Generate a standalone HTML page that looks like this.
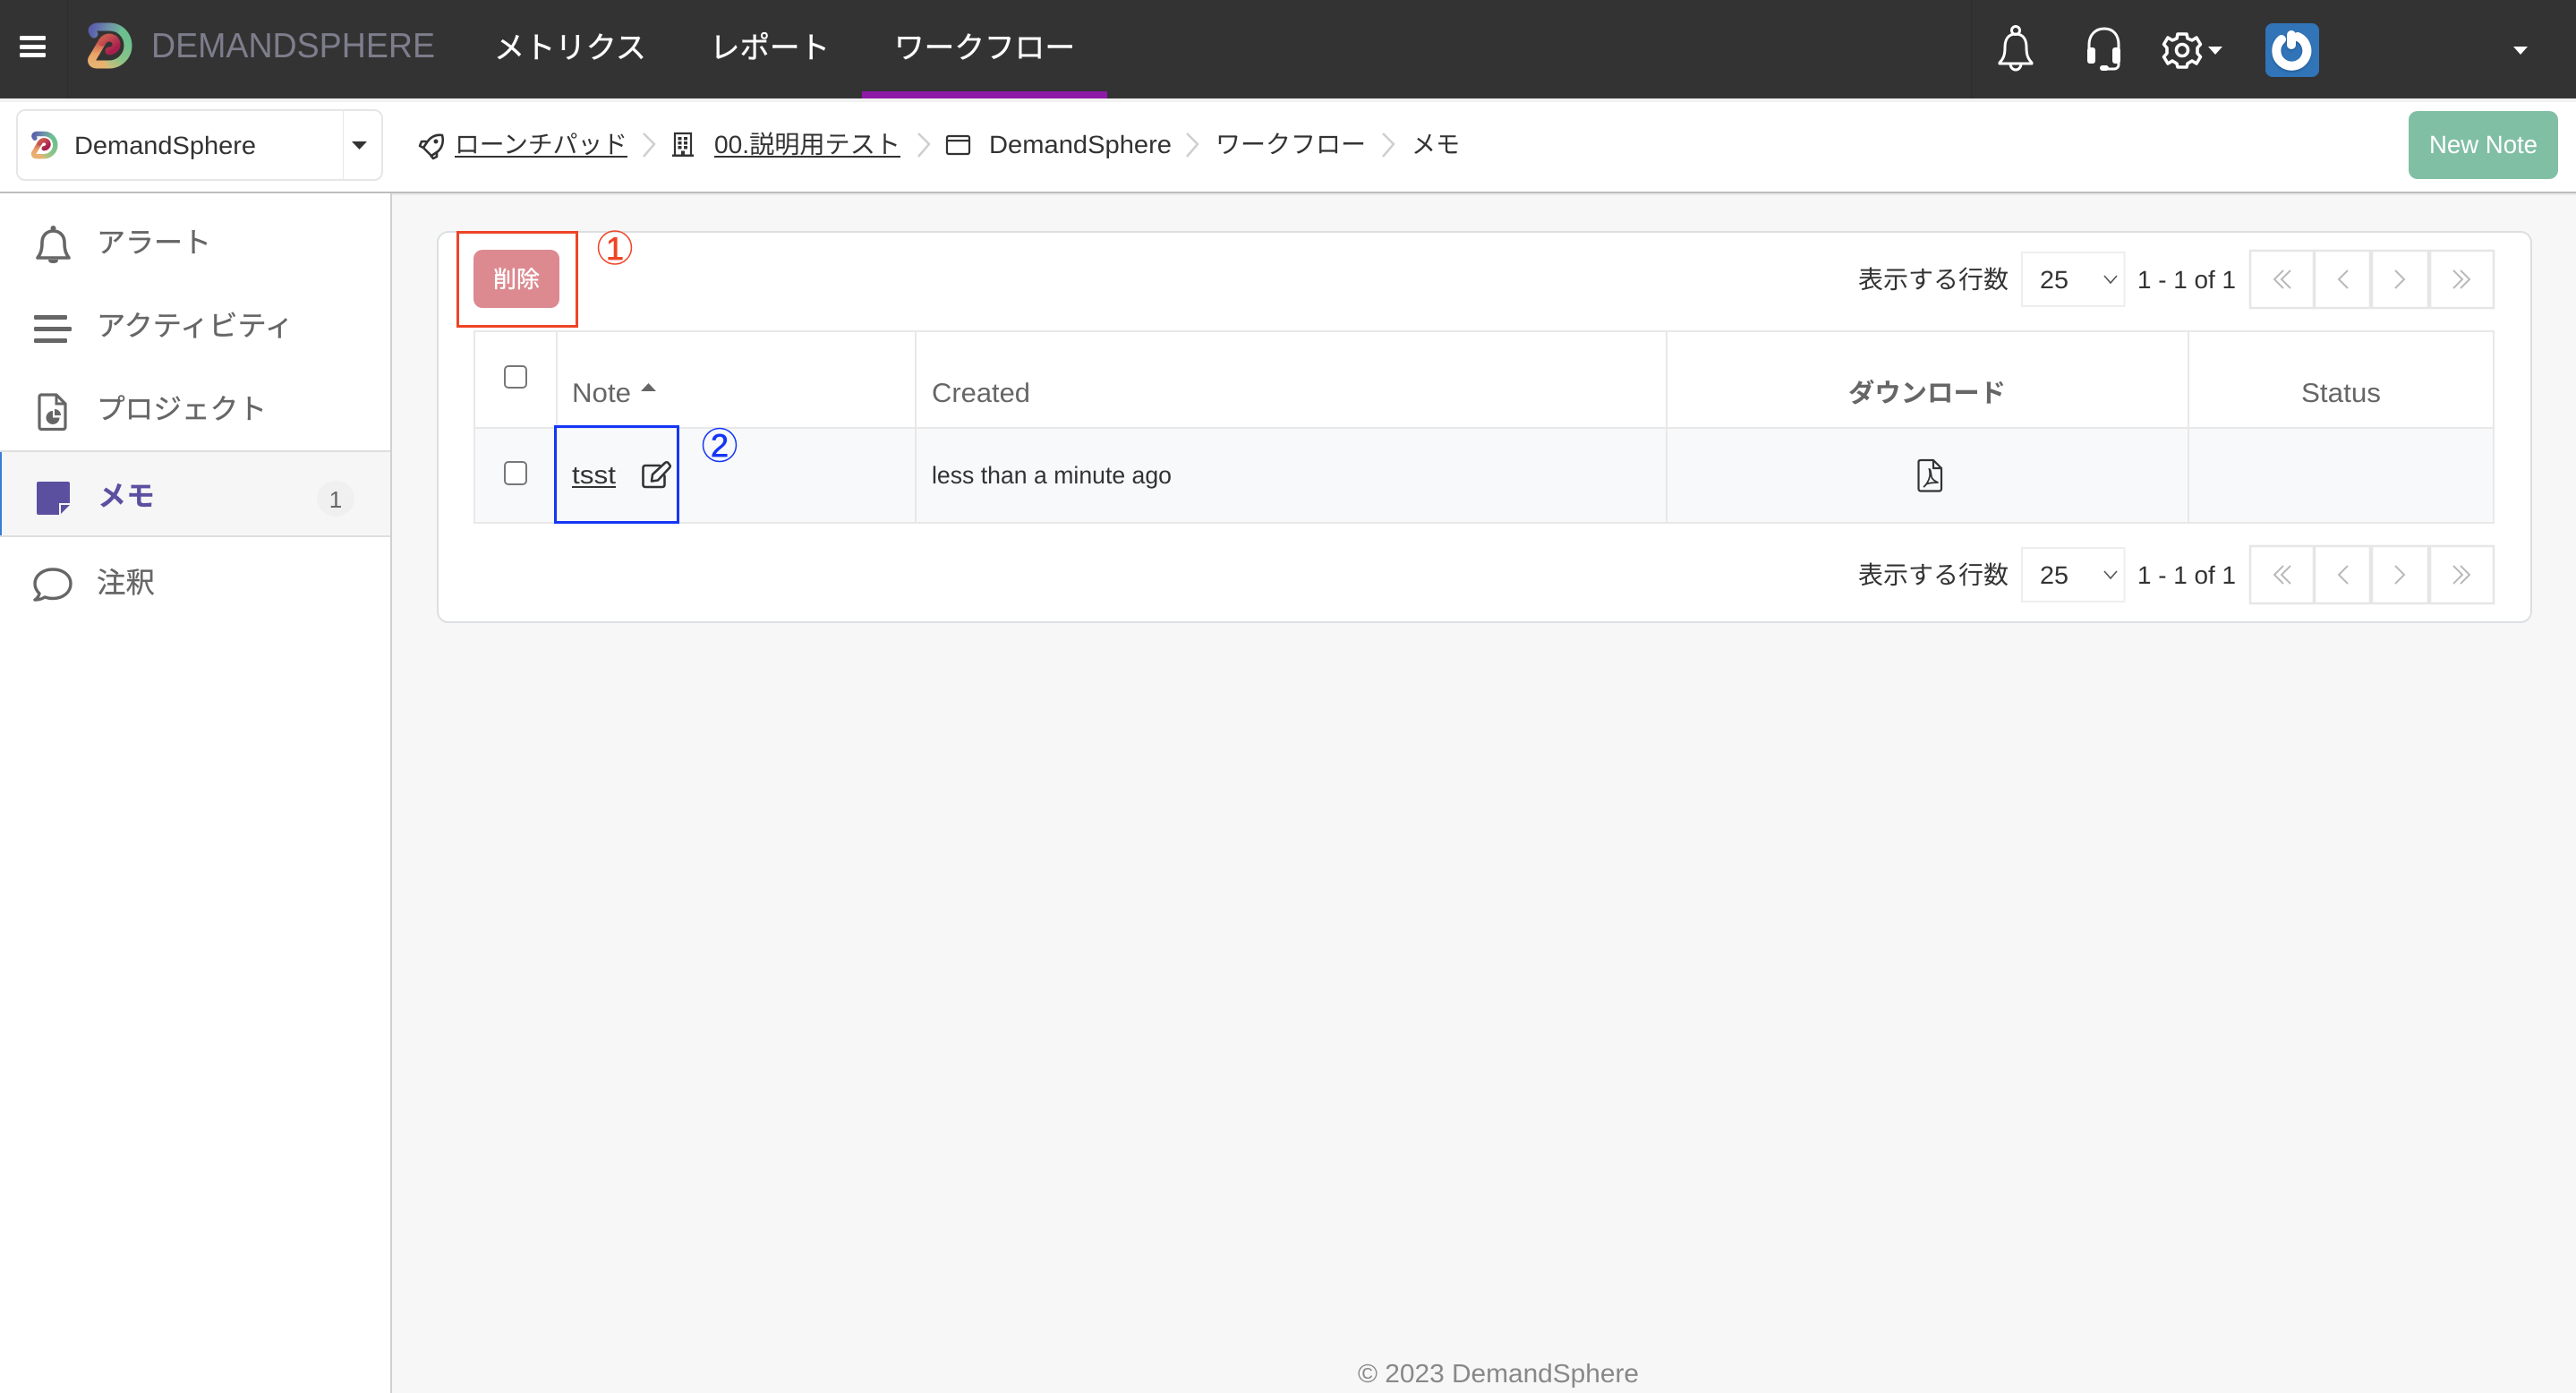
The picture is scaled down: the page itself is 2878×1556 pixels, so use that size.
<!DOCTYPE html>
<html lang="ja"><head><meta charset="utf-8"><title>Notes</title>
<style>
html,body{margin:0;padding:0;background:#f7f7f7}
svg{display:block}
text{font-family:"Liberation Sans","Noto Sans CJK JP",sans-serif;text-rendering:geometricPrecision}
</style></head><body>
<svg xmlns="http://www.w3.org/2000/svg" width="2878" height="1556" viewBox="0 0 2878 1556">
<defs>
<linearGradient id="g1" gradientUnits="userSpaceOnUse" x1="103" y1="30" x2="138" y2="40"><stop offset="0" stop-color="#5a5fae"/><stop offset=".5" stop-color="#6f93a8"/><stop offset="1" stop-color="#6cc08f"/></linearGradient>
<linearGradient id="g2" gradientUnits="userSpaceOnUse" x1="138" y1="40" x2="115" y2="72"><stop offset="0" stop-color="#6cc08f"/><stop offset=".6" stop-color="#8dc487"/><stop offset="1" stop-color="#d6bd78"/></linearGradient>
<linearGradient id="g3" gradientUnits="userSpaceOnUse" x1="112" y1="72" x2="114" y2="47"><stop offset="0" stop-color="#e8b270"/><stop offset=".45" stop-color="#eaa368"/><stop offset="1" stop-color="#c9564f"/></linearGradient>
<linearGradient id="g4" gradientUnits="userSpaceOnUse" x1="114" y1="45" x2="124" y2="58"><stop offset="0" stop-color="#c9564f"/><stop offset="1" stop-color="#a81f4c"/></linearGradient>
<g id="logo" fill="none" stroke-width="9" stroke-linecap="round" stroke-linejoin="round">
<path d="M105 38 C101 33 104 30 110 30 H122 C128 30 133 32 137 36" stroke="url(#g1)"/>
<path d="M137 36 C141 40 143 45 143 51 C143 63 133 72 122 72 H113" stroke="url(#g2)"/>
<path d="M115 72 H108 C103 72 101 68 104 64 L114 47" stroke="url(#g3)"/>
<path d="M114 47 C117 42 122 41 126 43 C130 45 131 50 129 53 C127 56 124 57 122 57" stroke="url(#g4)"/>
</g>
<g id="pager">
<rect x="2259" y="282" width="114.500" height="60" fill="#fff" stroke="#eeeeee" stroke-width="2"/>
<path d="M2351 308l7 8 7-8" fill="none" stroke="#555" stroke-width="1.600"/>
<text x="2076" y="322" font-size="28" fill="#333" textLength="168" lengthAdjust="spacingAndGlyphs">表示する行数</text>
<text x="2279" y="322" font-size="28" fill="#333" textLength="32" lengthAdjust="spacingAndGlyphs">25</text>
<text x="2388" y="322" font-size="28" fill="#333" textLength="110" lengthAdjust="spacingAndGlyphs">1 - 1 of 1</text>
<g fill="#fff" stroke="#e6e6e6" stroke-width="2.500">
<rect x="2514" y="280" width="71" height="64"/><rect x="2586" y="280" width="62" height="64"/><rect x="2650" y="280" width="63" height="64"/><rect x="2715" y="280" width="71" height="64"/>
</g>
<g fill="none" stroke="#b9b9b9" stroke-width="2">
<path d="M2551 302l-10 10 10 10M2559 302l-10 10 10 10"/>
<path d="M2623 302l-10 10 10 10"/>
<path d="M2676 302l10 10-10 10"/>
<path d="M2741 302l10 10-10 10M2749 302l10 10-10 10"/>
</g>
</g>
<filter id="sh" x="-20%" y="-20%" width="140%" height="140%"><feDropShadow dx="0" dy="1.500" stdDeviation="1.200" flood-color="#1d4f86" flood-opacity=".7"/></filter>
</defs>

<!-- page -->
<rect width="2878" height="1556" fill="#f7f7f7"/>
<rect y="118" width="436" height="1438" fill="#fff"/>
<rect x="436" y="216" width="2" height="1340" fill="#cfd2d4"/>

<!-- top bar -->
<rect width="2878" height="110" fill="#333333"/>
<rect x="75" width="1" height="110" fill="#2d2d2d"/>
<rect x="2202" width="1" height="110" fill="#2d2d2d"/>
<rect x="22" y="40" width="29" height="5" rx="1.500" fill="#fff"/><rect x="22" y="50" width="29" height="5" rx="1.500" fill="#fff"/><rect x="22" y="59" width="29" height="5" rx="1.500" fill="#fff"/>
<use href="#logo"/>
<text x="169" y="64" font-size="39" fill="#7d7d8c" textLength="317" lengthAdjust="spacingAndGlyphs">DEMANDSPHERE</text>
<g stroke="#fff" stroke-width=".4">
<text x="552" y="65" font-size="34" fill="#fff" textLength="170" lengthAdjust="spacingAndGlyphs">メトリクス</text>
<text x="793" y="65" font-size="34" fill="#fff" textLength="134" lengthAdjust="spacingAndGlyphs">レポート</text>
<text x="999" y="65" font-size="34" fill="#fff" textLength="202" lengthAdjust="spacingAndGlyphs">ワークフロー</text>
</g>
<rect x="963" y="102" width="274" height="8" fill="#8e1aa8"/>

<!-- top icons -->
<g fill="none" stroke="#fff" stroke-width="3" stroke-linejoin="round" stroke-linecap="round">
<circle cx="2252" cy="34" r="4.500"/>
<path d="M2252 38c-9 0-12 7-12 15 0 9-2 13-6 17v1h36v-1c-4-4-6-8-6-17 0-8-3-15-12-15z"/>
<path d="M2246 71c0 4 2.500 7 6 7s6-3 6-7"/>
<path d="M2334 62V50c0-11 7-18 17-18s16 7 16 18v22c0 3-2 5-5 5h-8"/>
</g>
<rect x="2332" y="53" width="9" height="18" rx="3" fill="#fff"/><rect x="2360" y="53" width="9" height="18" rx="3" fill="#fff"/><rect x="2346" y="73" width="10" height="6" rx="3" fill="#fff"/>
<g fill="none" stroke="#fff" stroke-width="3.600" stroke-linejoin="round">
<path d="M2433 38h10l1 5 5 2 5-3 4.500 7.500-3.500 4v6l3.500 4-4.500 7.500-5-3-5 3-1 4h-10l-1-4-5-3-5 3-4.500-7.500 3.500-4v-6l-3.500-4 4.500-7.500 5 3 5-2z"/>
<circle cx="2438" cy="56" r="6.500"/>
</g>
<path d="M2467 52h16l-8 9z" fill="#fff"/>
<rect x="2531" y="26" width="60" height="60" rx="8" fill="#3174b8"/>
<g filter="url(#sh)">
<path d="M2549 44a17 17 0 1 0 18-3" fill="none" stroke="#fff" stroke-width="10" stroke-linecap="round"/>
<rect x="2555" y="34" width="10" height="21" rx="5" fill="#fff"/>
</g>
<path d="M2808 52h16l-8 9z" fill="#fff"/>

<!-- sub header -->
<rect y="110" width="2878" height="4" fill="#f2f2f2"/>
<rect y="114" width="2878" height="100" fill="#fff"/>
<rect y="214" width="2878" height="2" fill="#bdbdbd"/>
<rect x="438" y="216" width="2440" height="2" fill="#eaeaea"/>

<rect x="19" y="123" width="408" height="78" rx="9" fill="#fff" stroke="#e6e6e6" stroke-width="2"/>
<rect x="383" y="124" width="1" height="76" fill="#e8e8e8"/>
<g transform="translate(-24 131.500) scale(.6)"><use href="#logo"/></g>
<text x="83" y="172" font-size="28" fill="#333" textLength="203" lengthAdjust="spacingAndGlyphs">DemandSphere</text>
<path d="M393 158h17l-8.500 9z" fill="#333"/>

<g fill="none" stroke="#333" stroke-width="2.600" stroke-linejoin="round" stroke-linecap="round">
<path d="M494 151c-7-1-13 2-17 8l-4 6 9 9 6-4c6-4 8-12 6-19z"/>
<path d="M476 158h-5l-2 5 4 2M488 170v5l-4 2-2.500-3"/>
</g>
<circle cx="487" cy="158" r="2.500" fill="#333"/>
<text x="508" y="171" font-size="28" fill="#333" textLength="193" lengthAdjust="spacingAndGlyphs">ローンチパッド</text>
<rect x="508" y="174" width="193" height="2" fill="#333"/>
<path d="M719 149l12 12-12 14" fill="none" stroke="#cfcfcf" stroke-width="2.500"/>
<path d="M754 173V149h18v24" fill="none" stroke="#333" stroke-width="2.200"/>
<rect x="751" y="172.500" width="24" height="2.500" fill="#333"/>
<g fill="#333"><rect x="757.500" y="153" width="4" height="3.500"/><rect x="764" y="153" width="4" height="3.500"/><rect x="757.500" y="158" width="4" height="3.500"/><rect x="764" y="158" width="4" height="3.500"/><rect x="757.500" y="163" width="4" height="3.500"/><rect x="764" y="163" width="4" height="3.500"/><rect x="761" y="168.500" width="4" height="4.500"/></g>
<text x="798" y="171" font-size="28" fill="#333" textLength="208" lengthAdjust="spacingAndGlyphs">00.説明用テスト</text>
<rect x="798" y="174" width="208" height="2" fill="#333"/>
<path d="M1026 149l12 12-12 14" fill="none" stroke="#cfcfcf" stroke-width="2.500"/>
<rect x="1058" y="152" width="25" height="20" rx="2" fill="none" stroke="#333" stroke-width="2.200"/><rect x="1058" y="156" width="25" height="2.200" fill="#333"/>
<text x="1105" y="171" font-size="28" fill="#333" textLength="204" lengthAdjust="spacingAndGlyphs">DemandSphere</text>
<path d="M1326 149l12 12-12 14" fill="none" stroke="#cfcfcf" stroke-width="2.500"/>
<text x="1358" y="171" font-size="28" fill="#333" textLength="168" lengthAdjust="spacingAndGlyphs">ワークフロー</text>
<path d="M1545 149l12 12-12 14" fill="none" stroke="#cfcfcf" stroke-width="2.500"/>
<text x="1577" y="171" font-size="28" fill="#333" textLength="54" lengthAdjust="spacingAndGlyphs">メモ</text>

<rect x="2691" y="124" width="167" height="76" rx="10" fill="#81bfa5"/>
<text x="2714" y="171" font-size="28" fill="#fff" textLength="121" lengthAdjust="spacingAndGlyphs">New Note</text>

<!-- sidebar -->
<g fill="none" stroke="#666" stroke-width="3.600" stroke-linejoin="round" stroke-linecap="round">
<path d="M59.500 258c-8 0-12.500 6-12.500 13 0 9-2 13-5 17h35c-3-4-5-8-5-17 0-7-4.500-13-12.500-13z"/>
</g>
<circle cx="59.500" cy="255" r="3" fill="#666"/><path d="M54 290h11c0 3-2 4-5.500 4s-5.500-1-5.500-4z" fill="#666"/>
<g stroke="#666" stroke-width=".35">
<text x="108" y="282" font-size="32" fill="#666" textLength="128" lengthAdjust="spacingAndGlyphs">アラート</text>
<text x="108" y="375" font-size="32" fill="#666" textLength="220" lengthAdjust="spacingAndGlyphs">アクティビティ</text>
<text x="108" y="468" font-size="32" fill="#666" textLength="190" lengthAdjust="spacingAndGlyphs">プロジェクト</text>
<text x="108" y="662" font-size="32" fill="#666" textLength="65" lengthAdjust="spacingAndGlyphs">注釈</text>
</g>

<rect x="38" y="352" width="37" height="5" rx="1.500" fill="#666"/><rect x="38" y="365" width="42" height="5" rx="1.500" fill="#666"/><rect x="38" y="378" width="37" height="5" rx="1.500" fill="#666"/>

<path d="M46 441h17l10 10v26c0 1.500-1 2.500-2.500 2.500h-24.500c-1 0-2-1-2-2.500v-34c0-1 1-2 2-2z" fill="none" stroke="#666" stroke-width="3.200" stroke-linejoin="round"/>
<path d="M63 441v10h10" fill="none" stroke="#666" stroke-width="3"/>
<path d="M59 459a7.500 7.500 0 1 0 7.500 7.500h-7.500z" fill="#666"/><path d="M61 457a7 7 0 0 1 7 7h-7z" fill="#666"/>

<rect x="0" y="503" width="436" height="97" fill="#f6f6f7"/>
<rect x="0" y="503" width="436" height="2" fill="#dedede"/><rect x="0" y="598" width="436" height="2" fill="#dedede"/>
<rect x="0" y="505" width="2" height="93" fill="#3a7bd5"/>
<path d="M43 538h33c1.200 0 2 .8 2 2v22H66v13H43c-1.200 0-2-.8-2-2v-33c0-1.200.8-2 2-2z" fill="#5b50a0"/>
<path d="M68 574v-10h10z" fill="#5b50a0"/>
<text x="109" y="565" font-size="32" font-weight="700" fill="#5b50a0" textLength="64" lengthAdjust="spacingAndGlyphs">メモ</text>
<ellipse cx="375" cy="557" rx="21" ry="20" fill="#f0f0f0"/>
<text x="375" y="567" font-size="26" fill="#666" text-anchor="middle">1</text>

<path d="M59 636c-11.500 0-20 7-20 16 0 4 2 8 5 11-.5 2-2 5-5 7 4.500 0 8-1 11-3 3 1 6 1.500 9 1.500 11.500 0 20-7 20-16.500s-8.500-16-20-16z" fill="none" stroke="#666" stroke-width="3.400" stroke-linejoin="round"/>

<!-- card -->
<rect x="489" y="259" width="2339" height="436" rx="12" fill="#fff" stroke="#dcdfe2" stroke-width="2"/>

<!-- delete -->
<rect x="529" y="279" width="96" height="65" rx="10" fill="#dc8a90"/>
<text x="577" y="321" font-size="26" fill="#fff" stroke="#fff" stroke-width=".4" text-anchor="middle">削除</text>
<rect x="511.500" y="259.500" width="133" height="105" fill="none" stroke="#ee4426" stroke-width="3"/>
<circle cx="687" cy="276.500" r="18.500" fill="none" stroke="#ee4426" stroke-width="1.500"/>
<text x="687" y="290" font-size="36" fill="#ee4426" stroke="#ee4426" stroke-width=".7" text-anchor="middle">1</text>

<use href="#pager"/>
<use href="#pager" y="330"/>

<!-- table -->
<rect x="530" y="370" width="2256" height="108" fill="#fff"/>
<rect x="530" y="478" width="2256" height="106" fill="#f8f9fb"/>
<g fill="none" stroke="#e8e8e8" stroke-width="2">
<rect x="530" y="370" width="2256" height="214"/>
<path d="M530 478H2786M622 370V584M1023 370V584M1862 370V584M2445 370V584"/>
</g>
<rect x="564" y="409" width="24" height="24" rx="4" fill="#fff" stroke="#777" stroke-width="2"/>
<rect x="564" y="516" width="24" height="25" rx="4" fill="#fff" stroke="#777" stroke-width="2"/>

<text x="639" y="449" font-size="30" fill="#666" textLength="66" lengthAdjust="spacingAndGlyphs">Note</text>
<path d="M716 437l8.500-9 8.500 9z" fill="#666"/>
<text x="1041" y="449" font-size="30" fill="#666" textLength="110" lengthAdjust="spacingAndGlyphs">Created</text>
<text x="2065" y="449" font-size="29" font-weight="700" fill="#666" textLength="176" lengthAdjust="spacingAndGlyphs">ダウンロード</text>
<text x="2571" y="449" font-size="30" fill="#666" textLength="89" lengthAdjust="spacingAndGlyphs">Status</text>

<text x="639" y="540" font-size="28" fill="#333" textLength="49" lengthAdjust="spacingAndGlyphs">tsst</text>
<rect x="639" y="543" width="49" height="2" fill="#333"/>
<g fill="none" stroke="#333" stroke-width="2.600" stroke-linejoin="round" stroke-linecap="round">
<path d="M737 520h-16c-1.500 0-2.500 1-2.500 2.500v19c0 1.500 1 2.500 2.500 2.500h19c1.500 0 2.500-1 2.500-2.500v-10"/>
<path d="M729 530l14-13c1-1 2.500-1 3.500 0l1.500 2c1 1 1 2.500 0 3.500l-13 14-7 1z"/>
</g>
<text x="1041" y="540" font-size="27" fill="#333" textLength="268" lengthAdjust="spacingAndGlyphs">less than a minute ago</text>

<g fill="none" stroke="#333" stroke-width="2.200" stroke-linejoin="round">
<path d="M2146 514h14l9 9v23c0 1.500-1 2.500-2.500 2.500h-20.500c-1.500 0-2.500-1-2.500-2.500v-30c0-1.500 1-2 2.500-2z"/>
<path d="M2160 514v9h9"/>
</g>
<path d="M2149 544c3-2 6-7 7-12 .5-3 0-6-.5-8 2 0 1.500 7 3 10 2 3 4 4 7 5-4 0-10 0-14 2" fill="none" stroke="#333" stroke-width="1.800"/>

<rect x="620.500" y="476.500" width="137" height="107" fill="none" stroke="#1436f5" stroke-width="3"/>
<circle cx="804" cy="497" r="18.500" fill="none" stroke="#1436f5" stroke-width="1.500"/>
<text x="804" y="510" font-size="36" fill="#1436f5" stroke="#1436f5" stroke-width=".7" text-anchor="middle">2</text>

<text x="1517" y="1544" font-size="29" fill="#888" textLength="314" lengthAdjust="spacingAndGlyphs">© 2023 DemandSphere</text>
</svg>
</body></html>
